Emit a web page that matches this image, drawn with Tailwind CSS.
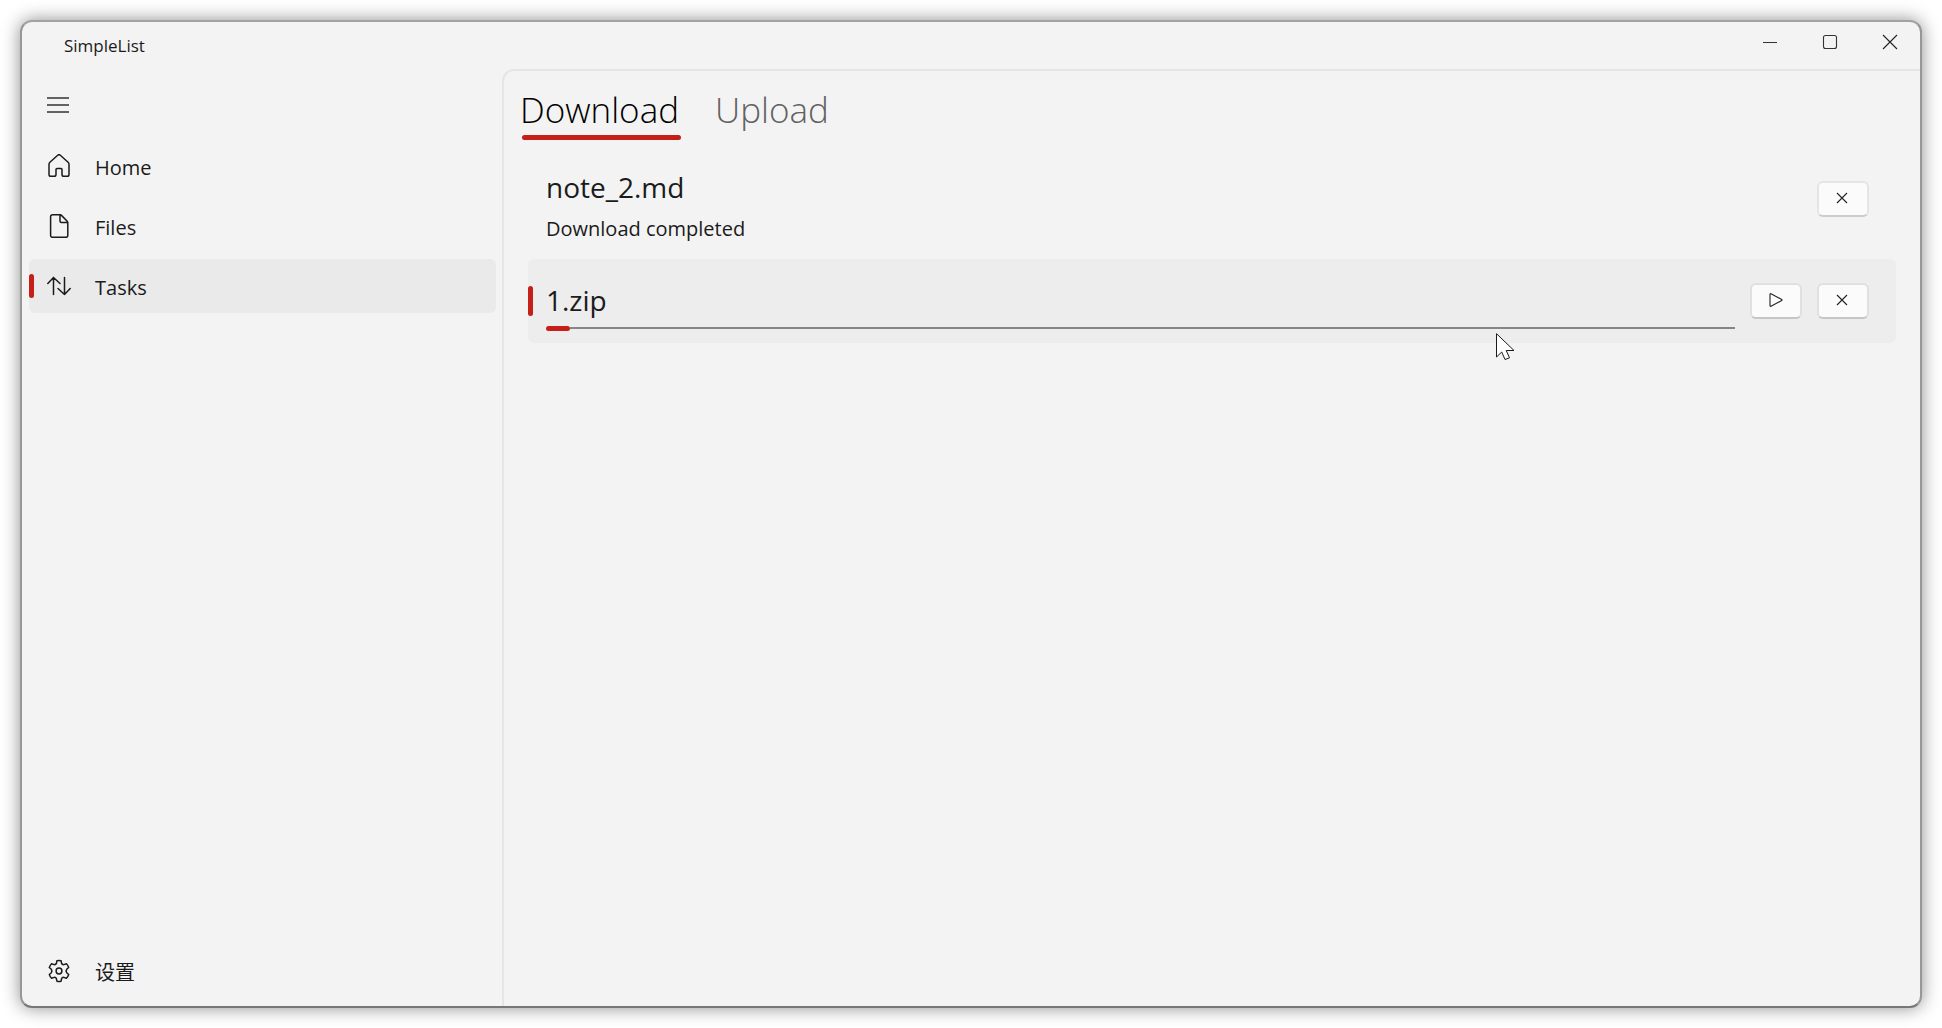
<!DOCTYPE html>
<html lang="en">
<head>
<meta charset="utf-8">
<meta name="viewport" content="width=device-width, initial-scale=1">
<title>SimpleList</title>
<script src="https://cdn.jsdelivr.net/npm/@tailwindcss/browser@4"></script>
</head>
<body class="min-h-screen flex bg-white p-5 font-['Open_Sans','Noto_Sans_CJK_SC',sans-serif] text-[#1b1b1b]">
<div class="relative flex-1 flex flex-col rounded-xl border-2 border-t-[#a2a2a2] border-x-[#979797] border-b-[#777777] bg-[#f3f3f3] shadow-[0_0_18px_rgba(0,0,0,0.45)]">

  <!-- Title bar -->
  <header class="flex h-[47px] items-start justify-between">
    <h1 class="pl-[42px] pt-2.5 text-[17px] leading-7">SimpleList</h1>
    <div class="flex">
      <button type="button" aria-label="Minimize" class="flex h-10 w-[60px] items-center justify-center">
        <svg class="size-4" viewBox="0 0 16 16" fill="none" stroke="#333" stroke-width="1"><path d="M1 8.5h14"/></svg>
      </button>
      <button type="button" aria-label="Maximize" class="flex h-10 w-[60px] items-center justify-center">
        <svg class="size-4" viewBox="0 0 16 16" fill="none" stroke="#333" stroke-width="1.1"><rect x="1.5" y="1.5" width="13" height="13" rx="2"/></svg>
      </button>
      <button type="button" aria-label="Close" class="flex h-10 w-[60px] items-center justify-center">
        <svg class="size-4" viewBox="0 0 16 16" fill="none" stroke="#222" stroke-width="1.1"><path d="M1 1l14 14M15 1L1 15"/></svg>
      </button>
    </div>
  </header>

  <div class="flex flex-1">
    <!-- Navigation pane -->
    <nav class="flex w-[480px] shrink-0 flex-col pr-1.5 pl-[7px] pb-2">
      <button type="button" aria-label="Toggle navigation" class="mt-3 mb-2.5 flex h-12 w-[60px] items-center pl-[18px]">
        <svg class="w-[22px] h-4" viewBox="0 0 22 16" fill="none" stroke="#333" stroke-width="1.5"><path d="M0 1h22M0 8h22M0 15h22"/></svg>
      </button>
      <ul class="flex flex-col gap-1.5 text-xl">
        <li><a href="#home" class="flex h-[54px] items-center gap-6 rounded-md pl-[18px]">
          <svg class="size-6" viewBox="0 0 24 24" fill="none" stroke="currentColor" stroke-width="1.5" stroke-linejoin="round"><path d="M2 10.300c0-.9.3-1.500.9-2.100L10.700 1.200a1.900 1.900 0 0 1 2.600 0l7.800 7c.6.600.9 1.200.9 2.100V20.500a1.800 1.800 0 0 1-1.800 1.800h-3.400A1.800 1.800 0 0 1 15 20.500v-5a1 1 0 0 0-1-1h-4a1 1 0 0 0-1 1v5a1.800 1.800 0 0 1-1.800 1.800H3.800A1.800 1.800 0 0 1 2 20.500z"/></svg>
          <span class="pt-1">Home</span></a></li>
        <li><a href="#files" class="flex h-[54px] items-center gap-6 rounded-md pl-[18px]">
          <svg class="size-6" viewBox="0 0 24 24" fill="none" stroke="currentColor" stroke-width="1.5" stroke-linejoin="round"><path d="M5.500.8h7.600c.6 0 1 .2 1.400.6l5.700 5.800c.4.4.6.8.6 1.400v12.800a1.900 1.900 0 0 1-1.900 1.900H5.500a1.900 1.900 0 0 1-1.900-1.900V2.700A1.900 1.900 0 0 1 5.500.8zM13 1v6a1.500 1.500 0 0 0 1.500 1.500h6"/></svg>
          <span class="pt-1">Files</span></a></li>
        <li><a href="#tasks" aria-current="page" class="relative flex h-[54px] items-center gap-6 rounded-md bg-[#eaeaea] pl-[18px]">
          <span class="absolute left-0 h-6 w-[5px] rounded-full bg-[#c42019]"></span>
          <svg class="size-6" viewBox="0 0 24 24" fill="none" stroke="currentColor" stroke-width="1.5" stroke-linecap="round" stroke-linejoin="round"><path d="M6.500 20.500V3.500M.8 9.500l5.700-6 6.500 6M17.500 3.500V20.500M11 14.500l6.500 6 5.700-6"/></svg>
          <span class="pt-1">Tasks</span></a></li>
      </ul>
      <a href="#settings" class="mt-auto flex h-[54px] items-center gap-6 rounded-md pl-[18px] text-xl">
        <svg class="size-6" viewBox="0 0 24 24" fill="none" stroke="currentColor" stroke-width="1.5" stroke-linejoin="round"><circle cx="12" cy="12" r="2.900"/><path d="M9.900 1.800Q12 1.200 14.100 1.800L14.600 4.400Q15.200 5.900 16.900 5.600L19.400 4.700Q21 6.300 21.700 8.500L19.700 10.300Q18.500 12 19.700 13.700L21.700 15.500Q21 17.700 19.400 19.300L16.900 18.400Q15.200 18.100 14.600 19.600L14.100 22.200Q12 22.800 9.900 22.200L9.400 19.600Q8.800 18.100 7.100 18.400L4.600 19.300Q3 17.700 2.300 15.500L4.300 13.700Q5.500 12 4.300 10.300L2.300 8.500Q3 6.300 4.600 4.700L7.100 5.600Q8.800 5.900 9.400 4.400Z"/></svg>
        <span class="pt-1" lang="zh-CN">设置</span></a>
    </nav>

    <!-- Content -->
    <main class="flex min-w-0 flex-1 flex-col rounded-tl-xl border-l-2 border-t-2 border-[#e5e5e5] pr-6 pl-4">
      <div role="tablist" class="flex h-[69px] gap-9 pt-3 text-[35px] font-light">
        <button type="button" role="tab" aria-selected="true" class="relative flex h-[57px] items-start leading-[54px] text-black">Download
          <span class="absolute -right-0.5 bottom-0 left-0.5 h-[5px] rounded-full bg-[#c42019]"></span></button>
        <button type="button" role="tab" aria-selected="false" class="flex h-[57px] items-start leading-[54px] text-[#616161]">Upload</button>
      </div>

      <ul class="flex flex-col gap-1 pl-2 pt-[3px]">
        <li class="flex h-28 items-center rounded-md pl-[18px] pr-[27px]">
          <div class="flex-1 pt-3.5">
            <h2 class="text-[28px] leading-10">note_2.md</h2>
            <p class="pt-1.5 text-xl leading-8">Download completed</p>
          </div>
          <button type="button" aria-label="Remove note_2.md" class="flex h-9 w-[52px] items-center justify-center rounded-md border-2 border-[#e5e5e5] border-b-[#cccccc] bg-[#fbfbfb] pr-0.5 pb-0.5">
            <svg class="size-3" viewBox="0 0 12 12" fill="none" stroke="#222" stroke-width="1.1"><path d="M1 1l10 10M11 1L1 11"/></svg>
          </button>
        </li>
        <li class="relative flex h-[84px] items-center gap-[15px] rounded-md bg-[#ededed] pl-[18px] pr-[27px]">
          <span class="absolute left-0 h-[30px] w-[5px] rounded-full bg-[#c42019]"></span>
          <div class="flex-1 pt-2">
            <h2 class="text-[28px] leading-10">1.zip</h2>
            <div role="progressbar" aria-label="1.zip" aria-valuenow="2" aria-valuemin="0" aria-valuemax="100" class="mt-1.5 flex h-[5px] items-center">
              <div class="h-[5px] rounded-full bg-[#c42019]" style="width:2%"></div>
              <div class="h-0.5 flex-1 bg-[#868686]"></div>
            </div>
          </div>
          <button type="button" aria-label="Resume 1.zip" class="flex h-9 w-[52px] items-center justify-center rounded-md border-2 border-[#e0e0e0] border-b-[#c6c6c6] bg-[#fbfbfb] pb-0.5">
            <svg class="size-3.5" viewBox="0 0 14 14" fill="none" stroke="#222" stroke-width="1.1" stroke-linejoin="round"><path d="M1 1.300c0-.5.500-.8 1-.5l10.700 5.600c.5.300.5.900 0 1.200L2 13.200c-.5.300-1 0-1-.5z"/></svg>
          </button>
          <button type="button" aria-label="Cancel 1.zip" class="flex h-9 w-[52px] items-center justify-center rounded-md border-2 border-[#e0e0e0] border-b-[#c6c6c6] bg-[#fbfbfb] pr-0.5 pb-0.5">
            <svg class="size-3" viewBox="0 0 12 12" fill="none" stroke="#222" stroke-width="1.1"><path d="M1 1l10 10M11 1L1 11"/></svg>
          </button>
        </li>
      </ul>
    </main>
  </div>

  <!-- Mouse pointer -->
  <svg class="pointer-events-none absolute right-[405px] top-[311px] h-[27px] w-[19px]" viewBox="0 0 19 27" fill="#fff" stroke="#1a1a24" stroke-width="1"><path d="M.5.7V24l5.200-5 3.300 7.500 4.500-1.700-3.300-7.300H18z"/></svg>
</div>
</body>
</html>
